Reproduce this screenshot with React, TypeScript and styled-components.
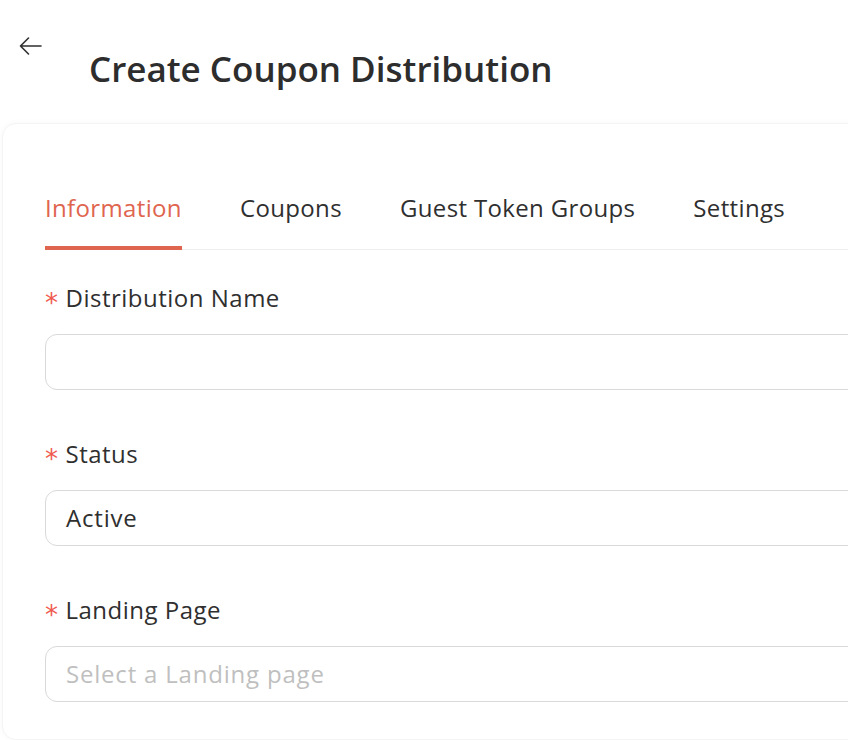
import React from "react";
import styled, { createGlobalStyle } from "styled-components";

const GlobalStyle = createGlobalStyle`
  html, body {
    margin: 0;
    padding: 0;
    background: #ffffff;
    overflow: hidden;
  }
  body {
    font-family: "Open Sans", Lato, sans-serif;
    color: #2f2f2f;
  }
  * { box-sizing: border-box; }
`;

const Page = styled.div`
  width: 848px;
  height: 740px;
  overflow: hidden;
  display: flex;
  flex-direction: column;
`;

const Header = styled.header`
  display: flex;
  align-items: flex-start;
  padding: 37px 0 0 19px;
`;

const BackButton = styled.button`
  width: 23px;
  height: 18px;
  padding: 0;
  border: none;
  background: transparent;
  color: #2f2f2f;
  cursor: pointer;
  display: flex;
`;

const Title = styled.h1`
  margin: 7px 0 0 47px;
  font-size: 35px;
  line-height: 50px;
  font-weight: 600;
  color: #2d2d2d;
`;

const Card = styled.section`
  margin: 29px 0 0 2px;
  width: 900px;
  flex: 1;
  border: 1px solid #f4f4f4;
  border-radius: 14px;
  box-shadow: 0 0 6px rgba(0, 0, 0, 0.03);
  padding: 46px 0 0 42px;
  background: #fff;
`;

const TabNav = styled.nav`
  display: flex;
  gap: 58px;
  border-bottom: 1px solid #eeeeee;
`;

const Tab = styled.div<{ $active?: boolean }>`
  padding: 20px 0 20px;
  margin-bottom: -1px;
  font-size: 24px;
  line-height: 36px;
  letter-spacing: 0.35px;
  color: ${(p) => (p.$active ? "#e0654f" : "#2f2f2f")};
  border-bottom: 4px solid ${(p) => (p.$active ? "#e0654f" : "transparent")};
  white-space: nowrap;
  cursor: pointer;
`;

const Form = styled.form`
  margin-top: 30px;
  display: flex;
  flex-direction: column;
  gap: 46px;
`;

const Field = styled.div`
  display: flex;
  flex-direction: column;
`;

const Label = styled.label`
  display: flex;
  align-items: center;
  height: 36px;
  margin-bottom: 18px;
  font-size: 24px;
  line-height: 36px;
  letter-spacing: 0.5px;
  color: #2f2f2f;
`;

const Required = styled.span`
  color: #ef5a4f;
  font-family: "DejaVu Sans", sans-serif;
  font-size: 26px;
  line-height: 1;
  margin-right: 7px;
  transform: translateY(5px);
`;

const InputBox = styled.div<{ $placeholder?: boolean }>`
  height: 56px;
  width: 860px;
  border: 1px solid #d9d9d9;
  border-radius: 12px;
  display: flex;
  align-items: center;
  padding: 0 0 2px 20px;
  font-size: 24px;
  letter-spacing: 0.8px;
  color: ${(p) => (p.$placeholder ? "#bfbfbf" : "#2f2f2f")};
`;

const ArrowLeft = () => (
  <svg width="23" height="18" viewBox="0 0 23 18" fill="none">
    <path
      d="M22 9H1.5M9.5 1L1.5 9L9.5 17"
      stroke="currentColor"
      strokeWidth="1.6"
      strokeLinecap="round"
      strokeLinejoin="round"
    />
  </svg>
);

const tabs = ["Information", "Coupons", "Guest Token Groups", "Settings"];

export default function App() {
  return (
    <>
      <GlobalStyle />
      <Page>
        <Header>
          <BackButton aria-label="Back">
            <ArrowLeft />
          </BackButton>
          <Title>Create Coupon Distribution</Title>
        </Header>
        <Card>
          <TabNav>
            {tabs.map((t, i) => (
              <Tab key={t} $active={i === 0}>
                {t}
              </Tab>
            ))}
          </TabNav>
          <Form>
            <Field>
              <Label>
                <Required>*</Required>Distribution Name
              </Label>
              <InputBox />
            </Field>
            <Field>
              <Label>
                <Required>*</Required>Status
              </Label>
              <InputBox>Active</InputBox>
            </Field>
            <Field>
              <Label>
                <Required>*</Required>Landing Page
              </Label>
              <InputBox $placeholder>Select a Landing page</InputBox>
            </Field>
          </Form>
        </Card>
      </Page>
    </>
  );
}
